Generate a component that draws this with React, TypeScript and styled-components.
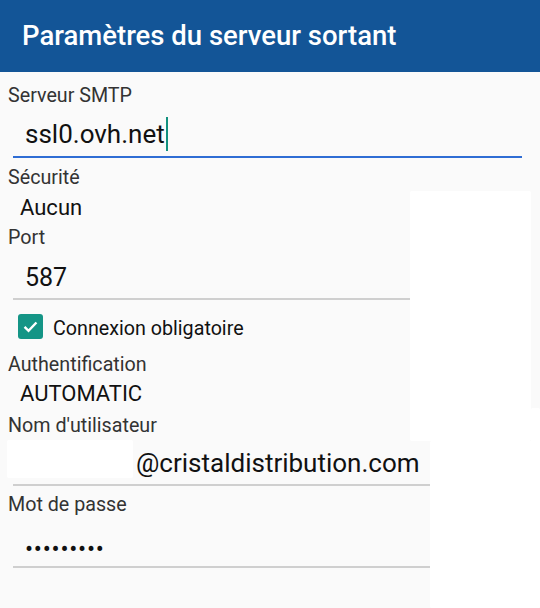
import styled, { createGlobalStyle } from "styled-components";

const GlobalStyle = createGlobalStyle`
    html, body {
        margin: 0;
        padding: 0;
        background: #fafafa;
    }
    body {
        font-family: Roboto, "Liberation Sans", sans-serif;
    }
`;

const Page = styled.div`
    position: relative;
    width: 540px;
    min-height: 608px;
    background: #fafafa;
    overflow: hidden;
`;

const Header = styled.header`
    height: 72px;
    line-height: 72px;
    padding-left: 22px;
    background: #135597;
    color: #ffffff;
    font-size: 27.5px;
    font-weight: 500;
`;

const Body = styled.main`
    display: flex;
    flex-direction: column;
    padding: 12px 18px 0 8px;
`;

const Label = styled.div<{ $gap: number }>`
    margin-top: ${(p) => p.$gap}px;
    height: 24px;
    line-height: 24px;
    font-size: 19.7px;
    color: #333333;
`;

const Input = styled.div<{ $gap: number; $size: number; $pad: number; $focused?: boolean }>`
    display: flex;
    align-items: center;
    margin: ${(p) => p.$gap}px 0 0 5px;
    padding: 0 0 ${(p) => p.$pad}px 12px;
    height: 34px;
    line-height: 34px;
    font-size: ${(p) => p.$size}px;
    color: #111111;
    border-bottom: 2px solid ${(p) => (p.$focused ? "#2f6dd4" : "#cfcfcf")};
`;

const Cursor = styled.span`
    width: 2.5px;
    height: 34px;
    margin-left: 1px;
    background: #12917f;
`;

const Domain = styled.span`
    padding-left: 111px;
`;

const Choice = styled.div<{ $gap: number }>`
    margin: ${(p) => p.$gap}px 0 0 12px;
    height: 28px;
    line-height: 28px;
    font-size: 22px;
    color: #111111;
`;

const CheckRow = styled.label`
    display: flex;
    align-items: flex-start;
    gap: 10px;
    margin: 14.5px 0 0 10px;
    height: 25px;
`;

const CheckBox = styled.span`
    display: flex;
    align-items: center;
    justify-content: center;
    width: 25px;
    height: 25px;
    border-radius: 3px;
    background: #149586;
`;

const CheckText = styled.span`
    padding-top: 1.5px;
    line-height: 25px;
    font-size: 19.7px;
    color: #111111;
`;

const Dots = styled.span`
    font-size: 24px;
    letter-spacing: 0.75px;
`;

const Redaction = styled.div<{ $x: number; $y: number; $w: number; $h: number }>`
    position: absolute;
    left: ${(p) => p.$x}px;
    top: ${(p) => p.$y}px;
    width: ${(p) => p.$w}px;
    height: ${(p) => p.$h}px;
    background: #ffffff;
    border-radius: 2px;
`;

export default function App() {
    return (
        <Page>
            <GlobalStyle />
            <Header>Paramètres du serveur sortant</Header>
            <Body>
                <Label $gap={0}>Serveur SMTP</Label>
                <Input $gap={9} $size={26} $pad={5} $focused>
                    ssl0.ovh.net
                    <Cursor />
                </Input>
                <Label $gap={8}>Sécurité</Label>
                <Choice $gap={3.5}>Aucun</Choice>
                <Label $gap={4.8}>Port</Label>
                <Input $gap={11} $size={25} $pad={2.5}>587</Input>
                <CheckRow>
                    <CheckBox>
                        <svg width="19" height="19" viewBox="0 0 24 24">
                            <path d="M4.5 12.5l5 5L19.5 7" fill="none" stroke="#fff" strokeWidth="3" />
                        </svg>
                    </CheckBox>
                    <CheckText>Connexion obligatoire</CheckText>
                </CheckRow>
                <Label $gap={13.7}>Authentification</Label>
                <Choice $gap={3.2}>AUTOMATIC</Choice>
                <Label $gap={5.4}>Nom d'utilisateur</Label>
                <Input $gap={8.5} $size={26} $pad={4}>
                    <Domain>@cristaldistribution.com</Domain>
                </Input>
                <Label $gap={7}>Mot de passe</Label>
                <Input $gap={14.8} $size={24} $pad={0}>
                    <Dots>•••••••••</Dots>
                </Input>
            </Body>
            <Redaction $x={410} $y={191} $w={121} $h={250} />
            <Redaction $x={531} $y={408} $w={9} $h={40} />
            <Redaction $x={430} $y={441} $w={110} $h={167} />
            <Redaction $x={7} $y={440} $w={126} $h={38} />
        </Page>
    );
}
